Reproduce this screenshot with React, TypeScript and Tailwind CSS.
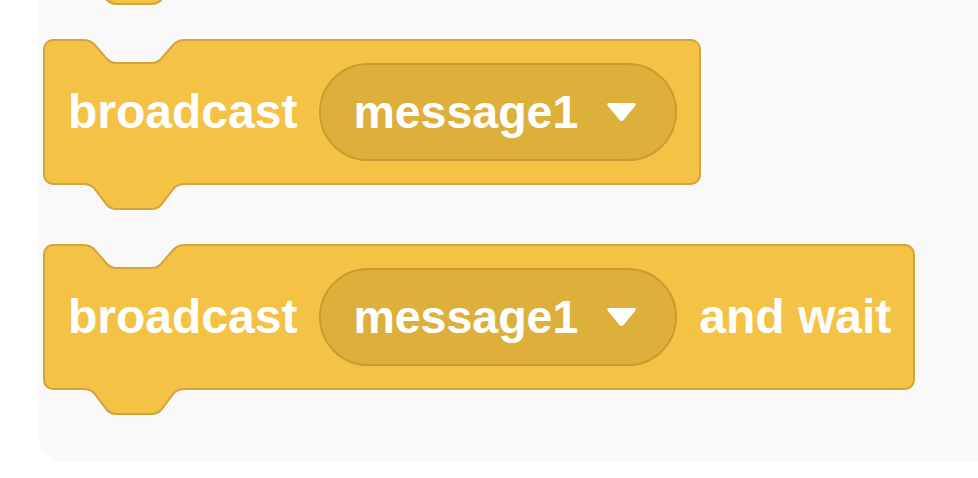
import type { ReactNode } from 'react';

const BLOCK = '#F4C244';
const EDGE = '#D3A43B';
const WORKSPACE = '#F9F9F9';

const notchLine =
  'M0,1 C5,1 8,2 11,5 L24,20 C27,23 29,24 33,24 L69,24 C73,24 75,23 78,20 L91,5 C94,2 97,1 102,1';
const tabLine =
  'M0,1 C5,1 8,2 11,5 L24,22 C27,25 29,26 33,26 L69,26 C73,26 75,25 78,22 L91,5 C94,2 97,1 102,1';

const TopNotch = () => (
  <svg className="absolute -top-[2px] left-[38px] overflow-visible" width="102" height="26" viewBox="0 0 102 26">
    <path d={`${notchLine} L102,-1 L0,-1 Z`} fill={WORKSPACE} />
    <path d={notchLine} fill="none" stroke={EDGE} strokeWidth="2" />
  </svg>
);

const BottomTab = () => (
  <svg className="absolute top-full left-[38px] overflow-visible" width="102" height="28" viewBox="0 0 102 28">
    <path d={`${tabLine} L102,0 L0,0 Z`} fill={BLOCK} />
    <path d={tabLine} fill="none" stroke={EDGE} strokeWidth="2" />
  </svg>
);

const Caret = () => (
  <svg width="31" height="20" viewBox="0 0 31 20" className="shrink-0">
    <path d="M3,1 L28,1 Q31,1 29,4 L17.5,18 Q15.5,20 13.5,18 L2,4 Q0,1 3,1 Z" fill="#ffffff" />
  </svg>
);

const Dropdown = ({ value }: { value: string }) => (
  <div className="flex h-[98px] items-center rounded-full border-2 border-[#C99C33] bg-[#DDAF3B] pl-[32px] pr-[38px]">
    <span className="text-[46.5px]">{value}</span>
    <span className="ml-[28px] flex">
      <Caret />
    </span>
  </div>
);

const StackBlock = ({ children }: { children: ReactNode }) => (
  <div className="relative flex h-[146px] items-center gap-[22px] rounded-[10px] border-2 border-[#D3A43B] bg-[#F4C244] pl-[23px] pr-[22px]">
    <TopNotch />
    {children}
    <BottomTab />
  </div>
);

export default function App() {
  return (
    <div className="h-[478px] w-[978px] overflow-hidden bg-white">
      <div
        className="ml-[39px] flex h-[462px] flex-col items-start rounded-bl-[25px] bg-[#F9F9F9] pl-[4px] text-[48px] font-bold leading-none text-white"
        style={{ fontFamily: '"Liberation Sans", Arial, Helvetica, sans-serif' }}
      >
        {/* tail of the block above, cut off by the top edge */}
        <svg className="ml-[40px] block" width="102" height="6" viewBox="0 22 102 6" overflow="hidden">
          <path d={`${tabLine} L102,0 L0,0 Z`} fill={BLOCK} />
          <path d={tabLine} fill="none" stroke={EDGE} strokeWidth="2" />
        </svg>

        <div className="mt-[33px]">
          <StackBlock>
            <span>broadcast</span>
            <Dropdown value="message1" />
          </StackBlock>
        </div>

        <div className="mt-[59px]">
          <StackBlock>
            <span>broadcast</span>
            <Dropdown value="message1" />
            <span>and wait</span>
          </StackBlock>
        </div>
      </div>
    </div>
  );
}
